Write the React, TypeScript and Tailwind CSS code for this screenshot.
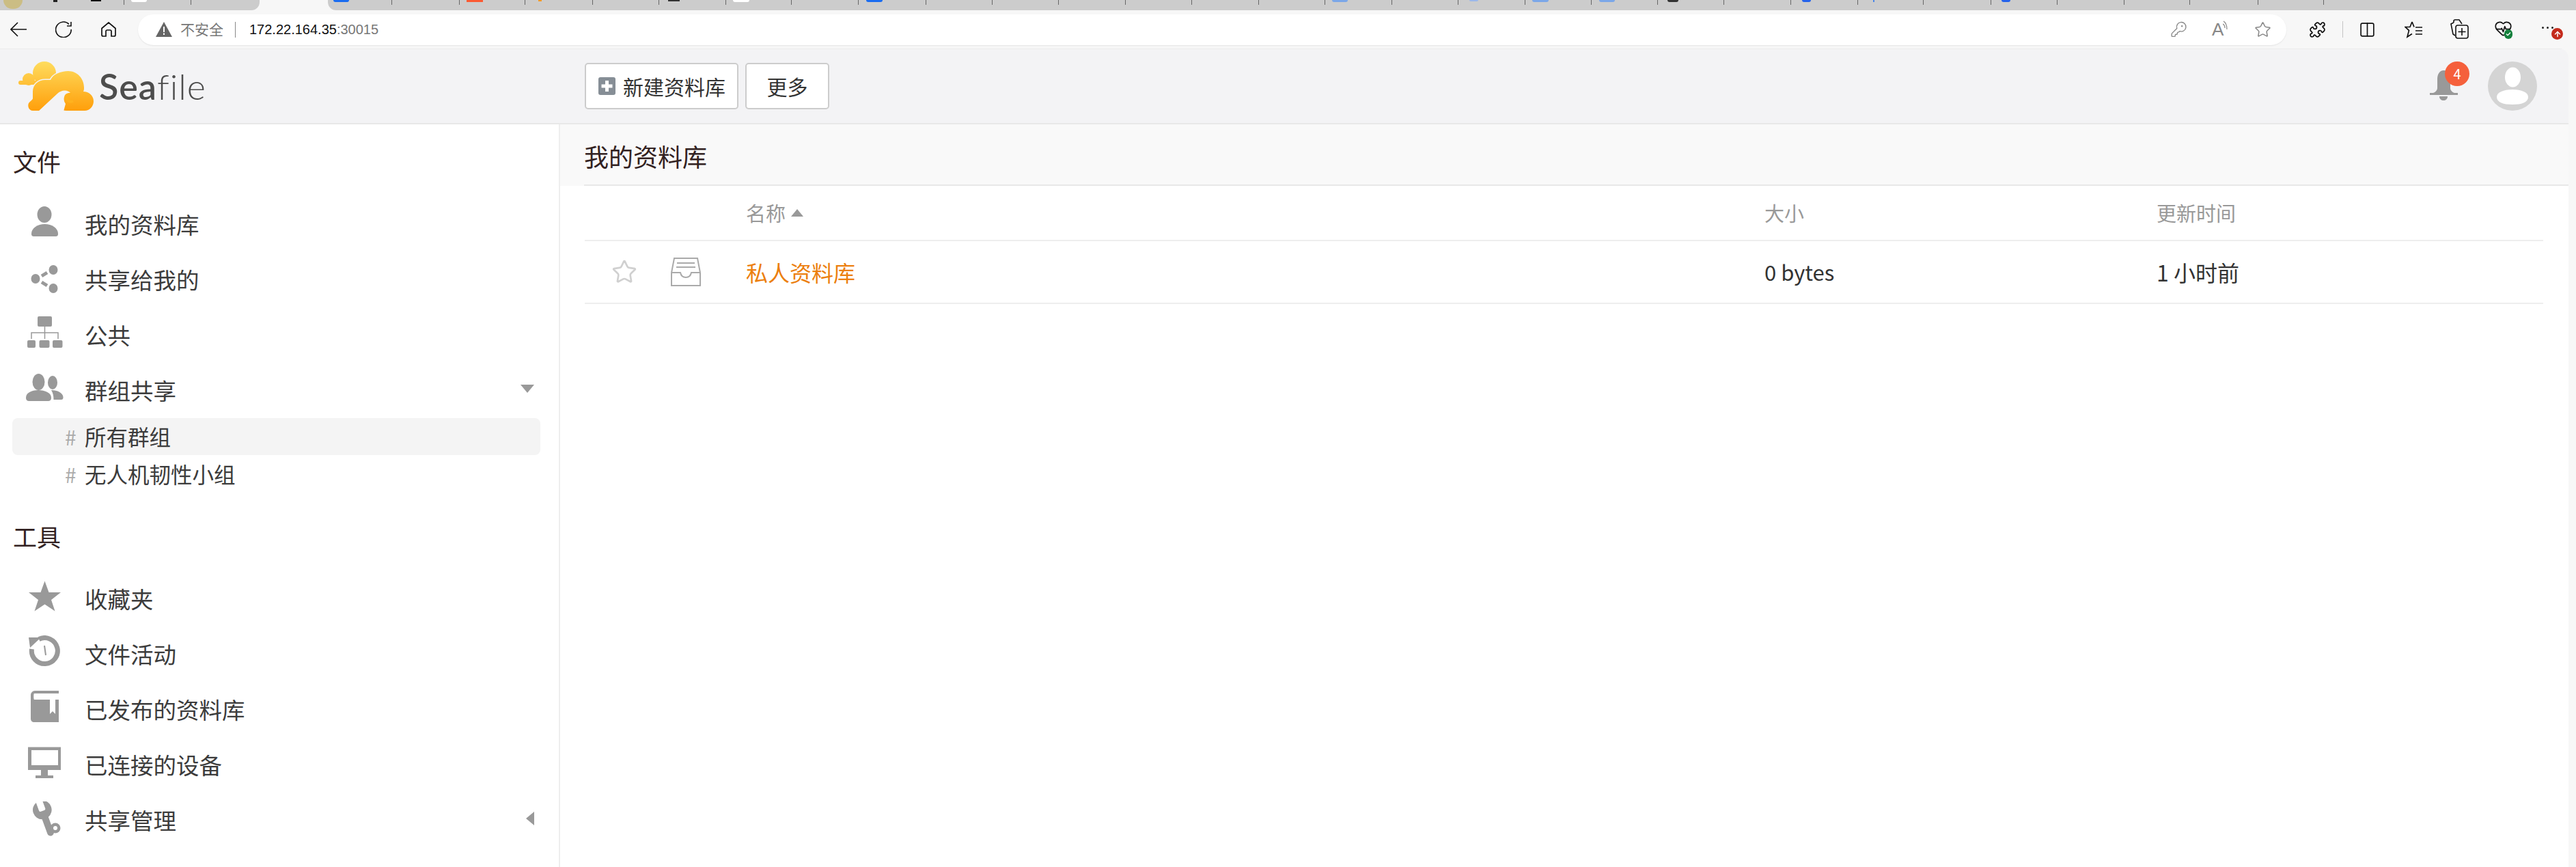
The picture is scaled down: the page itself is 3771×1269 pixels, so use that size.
import React from 'react';
import { Star, Puzzle, Columns2, HeartPulse, KeyRound, Check, ArrowUp } from 'lucide-react';

// separators of the tab strip, favicons peek out from the top of the crop
const tabs = [
  { w: 182, fav: [
    { ml: 5, w: 28, h: 13, c: 'bg-[#cbbd84]', r: 'rounded-b-full' },
    { ml: 45, w: 6, h: 3, c: 'bg-[#222222]', r: '' },
    { ml: 49, w: 15, h: 2, c: 'bg-[#111111]', r: '' },
  ] },
  { w: 98, fav: [{ ml: 10, w: 23, h: 3, c: 'bg-white', r: 'rounded-b-md' }] },
  { w: 100, fav: [], left: true },
  { w: 100, active: true, fav: [] },
  { w: 94, fav: [{ ml: 8, w: 23, h: 3, c: 'bg-[#1a6cf0]', r: 'rounded-b-md' }], right: true },
  { w: 99, fav: [] },
  { w: 96, fav: [{ ml: 10, w: 24, h: 3, c: 'bg-[#fb5a32]', r: '' }] },
  { w: 99, fav: [{ ml: 19, w: 5, h: 2, c: 'bg-[#f59a23]', r: '' }] },
  { w: 97, fav: [] },
  { w: 98, fav: [{ ml: 13, w: 17, h: 2, c: 'bg-[#333333]', r: '' }] },
  { w: 96, fav: [{ ml: 10, w: 24, h: 3, c: 'bg-white', r: 'rounded-b-md' }] },
  { w: 98, fav: [] },
  { w: 99, fav: [{ ml: 11, w: 24, h: 3, c: 'bg-[#1a6cf0]', r: 'rounded-b-md' }] },
  { w: 97, fav: [] },
  { w: 97, fav: [] },
  { w: 98, fav: [] },
  { w: 97, fav: [] },
  { w: 98, fav: [] },
  { w: 97, fav: [] },
  { w: 98, fav: [{ ml: 10, w: 23, h: 3, c: 'bg-[#7ba7e8]', r: 'rounded-b-md' }] },
  { w: 97, fav: [] },
  { w: 98, fav: [{ ml: 16, w: 13, h: 2, c: 'bg-[#9bb8ea]', r: 'rounded-b-md' }] },
  { w: 97, fav: [{ ml: 10, w: 24, h: 3, c: 'bg-[#7ba7e8]', r: 'rounded-b-md' }] },
  { w: 97, fav: [{ ml: 11, w: 23, h: 3, c: 'bg-[#7ba7e8]', r: 'rounded-b-md' }] },
  { w: 97, fav: [{ ml: 14, w: 16, h: 3, c: 'bg-[#333333]', r: 'rounded-b-sm' }] },
  { w: 98, fav: [] },
  { w: 98, fav: [{ ml: 16, w: 13, h: 3, c: 'bg-[#2563eb]', r: 'rounded-b-md' }] },
  { w: 96, fav: [{ ml: 22, w: 2, h: 3, c: 'bg-[#4a86e8]', r: '' }] },
  { w: 99, fav: [] },
  { w: 97, fav: [{ ml: 15, w: 13, h: 3, c: 'bg-[#2563eb]', r: 'rounded-b-md' }] },
  { w: 98, fav: [] },
  { w: 96, fav: [] },
  { w: 100, fav: [] },
  { w: 96, fav: [] },
];

function TabStrip() {
  return (
    <div className="flex h-[15px] bg-[#f7f7f7] overflow-hidden">
      {tabs.map((t, i) =>
        t.active ? (
          <div key={i} className="shrink-0 bg-[#f7f7f7]" style={{ width: t.w }} />
        ) : (
          <div
            key={i}
            className={`shrink-0 flex justify-between items-start bg-[#cccccc] ${t.left ? 'rounded-br-[12px]' : ''} ${t.right ? 'rounded-bl-[12px]' : ''}`}
            style={{ width: t.w }}
          >
            <div className="flex items-start">
              {t.fav.map((f, j) => (
                <div key={j} className={`${f.c} ${f.r}`} style={{ width: f.w, height: f.h, marginLeft: f.ml }} />
              ))}
            </div>
            {!t.left && <div className="w-px h-[7px] bg-[#666666]" />}
          </div>
        )
      )}
      <div className="flex-1 bg-[#cccccc]" />
    </div>
  );
}

function BrowserBar() {
  return (
    <div className="flex items-center h-[56px] bg-[#f7f7f7] text-[#111111]">
      <svg className="ml-[15px] w-[24px] h-[22px]" viewBox="0 0 24 22" fill="none" stroke="currentColor" strokeWidth="1.6">
        <path d="M24 11H1M11 1 1 11l10 10" />
      </svg>
      <svg className="ml-[42px] w-[24px] h-[24px]" viewBox="0 0 24 24" fill="none" stroke="currentColor" strokeWidth="1.6">
        <path d="M20 4.5A11.3 11.3 0 1 0 23.2 12M23 1v6h-6" />
      </svg>
      <svg className="ml-[43px] w-[22px] h-[22px]" viewBox="0 0 22 22" fill="none" stroke="currentColor" strokeWidth="1.7">
        <path d="M1 9.5 11 1l10 8.5V19a2 2 0 0 1-2 2h-4v-7a2 2 0 0 0-2-2H9a2 2 0 0 0-2 2v7H3a2 2 0 0 1-2-2z" />
      </svg>
      <div className="ml-[32px] w-[3145px] h-[45px] bg-white rounded-full shadow-[0_1px_2px_rgba(0,0,0,0.08)] flex items-center pl-[26px] pr-[22px]">
        <svg className="w-[24px] h-[22px]" viewBox="0 0 24 22">
          <path d="M12 0 24 22H0z" fill="#666666" />
          <path d="M11 7h2v8h-2zM11 16.5h2v2.500h-2z" fill="#ffffff" />
        </svg>
        <span className="ml-[12px] text-[21px] text-[#777777]">不安全</span>
        <div className="ml-[17px] w-px h-[23px] bg-[#888888]" />
        <span className="ml-[20px] text-[20px] font-['Liberation_Sans',sans-serif] text-[#111111]">
          172.22.164.35<span className="text-[#777777]">:30015</span>
        </span>
        <div className="ml-auto flex items-center gap-[36px] text-[#888888]">
          <KeyRound className="w-[25px] h-[26px]" strokeWidth={1.3} />
          <div className="flex items-start w-[26px] h-[26px]">
            <span className="text-[26px] leading-[26px] font-['Liberation_Sans',sans-serif] font-light">A</span>
            <svg className="w-[8px] h-[14px] -ml-[1px]" viewBox="0 0 8 14" fill="none" stroke="currentColor" strokeWidth="1.2">
              <path d="M1 1c3 2 5 6 5 12M0 5c2 1 3 3 3 6" />
            </svg>
          </div>
          <Star className="w-[25px] h-[25px]" strokeWidth={1.5} />
        </div>
      </div>
      <Puzzle className="ml-[33px] w-[25px] h-[25px]" strokeWidth={1.7} />
      <div className="ml-[24px] w-px h-[24px] bg-[#c4c4c4]" />
      <Columns2 className="ml-[23px] w-[25px] h-[25px]" strokeWidth={1.6} />
      <svg className="ml-[42px] w-[27px] h-[25px]" viewBox="0 0 27 25" fill="none" stroke="currentColor" strokeWidth="1.7">
        <path d="M11 1 8 8.500H1l5.500 5L4 23l7-4.500M11 1l3 7.500M16 9h10M16 14h10M16 19h10" />
      </svg>
      <svg className="ml-[39px] w-[28px] h-[30px]" viewBox="0 0 28 30" fill="none" stroke="currentColor" strokeWidth="1.6">
        <path d="M6 5V3a2 2 0 0 1 2-2h6l4 6M6 5 2 7l3 15 3 2" />
        <rect x="9" y="9" width="18" height="19" rx="3" />
        <path d="M18 13v11M12.500 18.500h11" />
      </svg>
      <div className="ml-[37px] w-[28px] h-[30px] flex items-start relative">
        <HeartPulse className="w-[27px] h-[27px]" strokeWidth={1.5} />
        <div className="absolute left-[15px] top-[15px] w-[12px] h-[14px] rounded-full bg-[#15803d] flex items-center justify-center">
          <Check className="w-[8px] h-[8px] text-white" strokeWidth={4} />
        </div>
      </div>
      <div className="ml-[42px] w-[36px] h-[30px] flex items-start relative">
        <div className="flex gap-[4px] mt-[11px]">
          <div className="w-[3px] h-[3px] rounded-full bg-[#222222]" />
          <div className="w-[3px] h-[3px] rounded-full bg-[#222222]" />
          <div className="w-[3px] h-[3px] rounded-full bg-[#222222]" />
        </div>
        <div className="absolute left-[14px] top-[13px] w-[17px] h-[17px] rounded-full bg-[#c42b1c] flex items-center justify-center">
          <ArrowUp className="w-[12px] h-[12px] text-white" strokeWidth={3} />
        </div>
      </div>
    </div>
  );
}

function Logo() {
  return (
    <div className="flex items-center">
      <svg className="w-[112px] h-[72px]" viewBox="27 90 112 72">
        <defs>
          <linearGradient id="sun" gradientUnits="userSpaceOnUse" x1="0" y1="90" x2="0" y2="162">
            <stop offset="0" stopColor="#fedc5e" />
            <stop offset="1" stopColor="#ff9f0b" />
          </linearGradient>
        </defs>
        <g fill="url(#sun)">
          <circle cx="65" cy="107" r="17" />
          <circle cx="42" cy="116" r="9" />
          <rect x="27" y="118" width="34" height="6" rx="3" />
        </g>
        <g fill="url(#sun)" stroke="#f3f3f5" strokeWidth="3" paintOrder="stroke">
          <path d="M48 134c0-10 8-17 18-17h8c3-8 15-13 26-13 13 0 23 11 23 24 0 2 0 4-1 6 8 0 15 6 15 14 0 8-6 14-13 14H97c-8 0-11-6-9-10l6-12-34 22H48c-6 0-8-7-6-11 2-3 6-5 6-7z" />
        </g>
        <path d="M56 163 84 137c6-6 16-6 20 0-5-2-9 0-10 5-1 4 0 7 2 10l-3 11z" fill="#f3f3f5" />
        <path d="M104 138c-4-1-6 2-6 5 0 5 5 7 9 5" fill="none" stroke="#ffb21e" strokeWidth="4" />
      </svg>
      <span className="ml-[6px] text-[52px] leading-none tracking-[1px] text-[#4d4d4d] font-['Lato',sans-serif]">
        <span className="font-semibold">Sea</span>
        <span className="font-light">file</span>
      </span>
    </div>
  );
}

const Glyph = ({ children }: { children: React.ReactNode }) => (
  <svg className="w-[56px] h-[56px] shrink-0 ml-[37px]" viewBox="0 0 56 56" fill="#999999">
    {children}
  </svg>
);

const icons: Record<string, React.ReactNode> = {
  user: (
    <>
      <ellipse cx="28" cy="13" rx="10.500" ry="12" />
      <path d="M9 41c0-8 9-14 19.500-14S48 33 48 41c0 3-1 4-4 4H13c-3 0-4-1-4-4z" />
    </>
  ),
  share: (
    <>
      <ellipse cx="41" cy="13" rx="6.500" ry="7" />
      <ellipse cx="15" cy="26" rx="6.500" ry="7" />
      <ellipse cx="41" cy="40" rx="6.500" ry="7" />
      <path d="M24 22l8-5M24 31l8 5" stroke="#999999" strokeWidth="5" />
    </>
  ),
  org: (
    <>
      <rect x="18" y="0" width="21" height="15" rx="2" />
      <path d="M28.500 15v18M9 33v-9h39v9" fill="none" stroke="#999999" strokeWidth="1.500" />
      <rect x="3" y="35" width="12" height="11" rx="2" />
      <rect x="20.500" y="35" width="15" height="11" rx="2" />
      <rect x="40" y="35" width="14.500" height="11" rx="2" />
    </>
  ),
  group: (
    <>
      <ellipse cx="19.500" cy="15" rx="9" ry="12" />
      <ellipse cx="40" cy="16" rx="7" ry="10" />
      <path d="M1 38c0-7 8-11 18-11s19 4 19 11c0 4-2 5-5 5H6c-3 0-5-1-5-5z" />
      <path d="M38 27c9 0 17 4 17.500 10 .2 3-1 4-3 4H41.500c0-6-1-10-3.500-14z" />
    </>
  ),
  star: <path d="M28.500 1.500 34.500 18H52L38 29l5.500 16.500-15-10-15 10L19 29 5 18h17.500z" />,
  history: (
    <>
      <path d="M20 5.500A19 19 0 1 1 9.500 20" fill="none" stroke="#999999" strokeWidth="7" />
      <path d="M5 3h18L7 18z" />
      <path d="M28 15l2 14" stroke="#999999" strokeWidth="2" />
    </>
  ),
  book: (
    <>
      <path d="M14 0h35v46H13c-3 0-5-2-5-5V6c0-3 3-6 6-6z" />
      <path d="M13 4h36v9h-5v21l-4-4-4 4V13H13c-1 0-1-9 0-9z" fill="#ffffff" />
    </>
  ),
  monitor: (
    <>
      <path d="M4 1.500h48V35H33v8h8v4H15v-4h8v-8H4zM9 6v22h39V6z" fillRule="evenodd" />
    </>
  ),
  wrench: (
    <>
      <g transform="rotate(25 28 24) translate(57 -3.600) scale(-2.300 2.300)">
        <path d="M14.700 6.300a1 1 0 0 0 0 1.400l1.600 1.600a1 1 0 0 0 1.400 0l3.770-3.770a6 6 0 0 1-7.940 7.940l-6.910 6.910a2.120 2.120 0 0 1-3-3l6.910-6.910a6 6 0 0 1 7.940-7.940l-3.760 3.760z" />
      </g>
      <circle cx="44" cy="39" r="7.500" />
      <circle cx="44" cy="39" r="3" fill="#ffffff" />
    </>
  ),
};

function NavItem({ icon, label, caret }: { icon: string; label: string; caret?: 'down' | 'left' }) {
  return (
    <div className="flex items-center h-[81px]">
      <Glyph>{icons[icon]}</Glyph>
      <span className="ml-[31px] text-[33.500px] text-[#3c3c3c]">{label}</span>
      {caret === 'down' && <div className="ml-auto mr-[36px] -mt-[5px] w-0 h-0 border-x-[10px] border-x-transparent border-t-[12px] border-t-[#999999]" />}
      {caret === 'left' && <div className="ml-auto mr-[36px] -mt-[6px] w-0 h-0 border-y-[10px] border-y-transparent border-r-[12px] border-r-[#999999]" />}
    </div>
  );
}

function SubItem({ label, active }: { label: string; active?: boolean }) {
  return (
    <div className={`flex items-center h-[54px] mx-[18px] w-[773px] rounded-[8px] ${active ? 'bg-[#f4f4f4]' : ''}`}>
      <span className="ml-[77px] w-[29px] text-[30px] text-[#aaaaaa]">#</span>
      <span className="text-[31.500px] text-[#3c3c3c]">{label}</span>
    </div>
  );
}

function Sidebar() {
  return (
    <aside className="w-[820px] shrink-0 border-r-2 border-[#eeeeee] bg-white h-[1087px]">
      <h3 className="mt-[29px] mb-[27px] h-[50px] leading-[50px] pl-[19px] text-[35px] text-[#322222]">文件</h3>
      <NavItem icon="user" label="我的资料库" />
      <NavItem icon="share" label="共享给我的" />
      <NavItem icon="org" label="公共" />
      <NavItem icon="group" label="群组共享" caret="down" />
      <div className="flex flex-col gap-[1px]">
        <SubItem label="所有群组" active />
        <SubItem label="无人机韧性小组" />
      </div>
      <h3 className="mt-[39px] mb-[26px] h-[50px] leading-[50px] pl-[19px] text-[35px] text-[#322222]">工具</h3>
      <NavItem icon="star" label="收藏夹" />
      <NavItem icon="history" label="文件活动" />
      <NavItem icon="book" label="已发布的资料库" />
      <NavItem icon="monitor" label="已连接的设备" />
      <NavItem icon="wrench" label="共享管理" caret="left" />
    </aside>
  );
}

function RepoTable() {
  return (
    <div className="ml-[36px] mr-[37px]">
      <div className="grid grid-cols-[116px_64px_1547px_574px_1fr] items-center h-[81px] border-b-2 border-[#eeeeee] text-[29px] text-[#999999]">
        <div />
        <div />
        <div className="pl-[56px] flex items-center gap-[8px]">
          名称
          <svg className="w-[18px] h-[11px]" viewBox="0 0 18 11" fill="#999999">
            <path d="M9 0 18 11H0z" />
          </svg>
        </div>
        <div>大小</div>
        <div>更新时间</div>
      </div>
      <div className="grid grid-cols-[116px_64px_1547px_574px_1fr] items-center h-[92px] border-b-2 border-[#eeeeee] text-[32px] text-[#333333]">
        <div className="flex justify-center">
          <Star className="w-[38px] h-[38px] text-[#d0d0d0]" strokeWidth={1.7} />
        </div>
        <div className="flex justify-center">
          <svg className="w-[44px] h-[42px]" viewBox="0 0 44 42" fill="none" stroke="#aaaaaa" strokeWidth="2">
            <path d="M1 22 5 1h34l4 21v19H1z" />
            <path d="M1 22h13c1 5 4 7 8 7s7-2 8-7h13M9 8h26M8 14h28" />
          </svg>
        </div>
        <div className="pl-[56px] text-[#ec7f0f]">私人资料库</div>
        <div className="text-[31px]">0 bytes</div>
        <div>1 小时前</div>
      </div>
    </div>
  );
}

export default function App() {
  return (
    <div className="w-[3771px] h-[1269px] overflow-hidden bg-[#f7f7f7] font-['Noto_Sans_CJK_SC','Noto_Sans',sans-serif] font-normal">
      <TabStrip />
      <BrowserBar />
      <div className="w-[3760px] rounded-tr-[14px] overflow-hidden">
        <header className="flex items-center h-[111px] border-b-2 border-[#e8e8e8] bg-[#f3f3f5] pl-[27px] pr-[46px] border-t border-t-[#ececec]">
          <div className="w-[829px] shrink-0">
            <Logo />
          </div>
          <button className="flex items-center w-[225px] h-[68px] bg-white border-2 border-[#cccccc] rounded-[5px] pl-[18px] text-[30px] text-[#333333]">
            <svg className="w-[25px] h-[26px] mr-[11px]" viewBox="0 0 25 26">
              <rect width="25" height="26" rx="3" fill="#868e96" />
              <path d="M10 5h5v5.500h5.500v5H15V21h-5v-5.500H4.500v-5H10z" fill="#ffffff" />
            </svg>
            新建资料库
          </button>
          <button className="ml-[10px] w-[123px] h-[68px] bg-white border-2 border-[#cccccc] rounded-[5px] text-[30px] text-[#333333]">
            更多
          </button>
          <div className="ml-auto relative w-[58px] h-[72px] mr-[27px]">
            <svg className="w-[41px] h-[44px] mt-[13px]" viewBox="0 0 41 44" fill="#999999">
              <path d="M20.500 0C27 0 30 6 30 13v13c0 3 3 6 6 7H5c3-1 6-4 6-7V13C11 6 14 0 20.500 0z" />
              <rect x="0" y="33" width="41" height="3" />
              <path d="M14 38h12c0 4-3 6-6 6s-6-2-6-6z" />
            </svg>
            <div className="absolute left-[22px] top-0 w-[36px] h-[36px] rounded-full bg-[#f5603c] flex items-center justify-center text-[20px] text-white">
              4
            </div>
          </div>
          <svg className="w-[72px] h-[72px]" viewBox="0 0 72 72">
            <circle cx="36" cy="36" r="36" fill="#d4d4d4" />
            <ellipse cx="36.500" cy="23" rx="11.500" ry="14.500" fill="#ffffff" />
            <path d="M13 52c0-7 10-11 23-11s23 4 23 11c0 8-10 11-23 11S13 60 13 52z" fill="#ffffff" />
          </svg>
        </header>
        <div className="flex bg-white">
          <Sidebar />
          <main className="flex-1">
            <div className="bg-[#f9f9f9] pl-[36px]">
              <div className="h-[90px] pt-[3px] border-b-2 border-[#e8e8e8] flex items-center text-[36px] text-[#322222] -ml-px">我的资料库</div>
            </div>
            <RepoTable />
          </main>
        </div>
      </div>
    </div>
  );
}
